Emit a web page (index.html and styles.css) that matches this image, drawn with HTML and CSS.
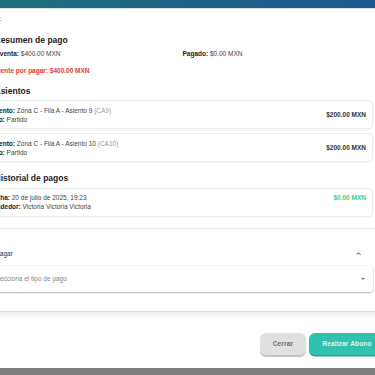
FILE: index.html
```html
<!DOCTYPE html>
<html lang="es">
<head>
    <meta charset="UTF-8">
    <meta name="viewport" content="width=device-width, initial-scale=1.0">
    <title>Detalle de venta</title>
    <link rel="stylesheet" href="styles.css">
</head>
<body>

    <div class="modal">
        <div class="modal-top"></div>

        <div class="modal-body">
            <p class="meta">Venta:</p>

            <h3 class="section-title">
                <svg width="9" height="9" viewBox="0 0 10 10"><rect x="1" y="2" width="8" height="6" rx="1" fill="none" stroke="#333" stroke-width="1.2"/></svg>
                Resumen de pago
            </h3>
            <div class="summary">
                <span><b>Total venta:</b> $400.00 MXN</span>
                <span><b>Pagado:</b> $0.00 MXN</span>
            </div>
            <p class="pending">Pendiente por pagar: $400.00 MXN</p>

            <h3 class="section-title">
                <svg width="9" height="9" viewBox="0 0 10 10"><rect x="2" y="2" width="6" height="6" fill="none" stroke="#333" stroke-width="1.2"/></svg>
                Asientos
            </h3>
            <div class="card">
                <div>
                    <div><b>Asiento:</b> Zona C - Fila A - Asiento 9 <span class="code">(CA9)</span></div>
                    <div><b>Tipo:</b> Partido</div>
                </div>
                <div class="amount">$200.00 MXN</div>
            </div>
            <div class="card">
                <div>
                    <div><b>Asiento:</b> Zona C - Fila A - Asiento 10 <span class="code">(CA10)</span></div>
                    <div><b>Tipo:</b> Partido</div>
                </div>
                <div class="amount">$200.00 MXN</div>
            </div>

            <h3 class="section-title">
                <svg width="9" height="9" viewBox="0 0 10 10"><circle cx="5" cy="5" r="3.5" fill="none" stroke="#333" stroke-width="1.2"/></svg>
                Historial de pagos
            </h3>
            <div class="card card-top">
                <div>
                    <div><b>Fecha:</b> 20 de julio de 2025, 19:23</div>
                    <div><b>Vendedor:</b> Victoria Victoria Victoria</div>
                </div>
                <div class="amount paid">$0.00 MXN</div>
            </div>
        </div>

        <div class="accordion">
            <div class="accordion-header">
                <span>Pagar</span>
                <svg width="5" height="3" viewBox="0 0 5 3"><path d="M0.6 2.7 L2.5 0.8 L4.4 2.7" fill="none" stroke="#333" stroke-width="1"/></svg>
            </div>
            <div class="select">
                <span>Selecciona el tipo de pago</span>
                <svg width="4" height="2" viewBox="0 0 4 2"><polygon points="0,0 4,0 2,2" fill="#777"/></svg>
            </div>
        </div>

        <div class="modal-footer">
            <button class="btn btn-close">Cerrar</button>
            <button class="btn btn-pay">Realizar Abono</button>
        </div>
    </div>

</body>
</html>
```

FILE: styles.css
```css
html, body {
    overflow: hidden;
}

body {
    margin: 0;
    background-color: #7f7f7f;
    font-family: "Liberation Sans", Arial, sans-serif;
    font-size: 6.5px;
    line-height: 9px;
    color: #444;
}

b {
    color: #222;
}

.modal {
    width: 422px;
    margin-left: -33px;
    background-color: #fff;
    box-shadow: 0 2px 6px rgba(0, 0, 0, 0.3);
}

.modal-top {
    height: 8px;
    background: linear-gradient(90deg, #1a737a, #1f5892);
    box-shadow: 0 1px 0 rgba(0, 0, 0, 0.12);
}

.modal-body {
    padding: 5.5px 16px 11px;
}

.meta {
    margin: 0;
    color: #555;
}

.section-title {
    display: flex;
    align-items: center;
    gap: 2.5px;
    margin: 12px 0 3.5px;
    font-size: 8.5px;
    line-height: 11px;
    color: #222;
}

.section-title + .card {
    margin-top: 0;
}

.summary {
    display: grid;
    grid-template-columns: 1fr 1fr;
    column-gap: 9px;
}

.pending {
    margin: 7.5px 0 0;
    color: #e53935;
    font-weight: bold;
}

.pending + .section-title,
.card + .section-title {
    margin-top: 11px;
}

.card {
    display: flex;
    justify-content: space-between;
    align-items: center;
    margin-top: 4px;
    padding: 4.5px 6px 4.5px 5px;
    border: 1px solid #ececec;
    border-radius: 4px;
    box-shadow: 0 1px 1px rgba(0, 0, 0, 0.04);
}

.card-top {
    align-items: flex-start;
}

.code {
    color: #999;
}

.amount {
    font-weight: bold;
    color: #333;
}

.amount.paid {
    color: #3ccf7e;
}

.accordion {
    border-top: 1px solid #e8e8e8;
    padding: 0 16px 19.5px;
}

.accordion-header {
    display: flex;
    justify-content: space-between;
    align-items: center;
    padding: 20px 12px 8.5px 12.5px;
    color: #333;
}

.select {
    display: flex;
    justify-content: space-between;
    align-items: center;
    padding: 8.3px 8px 8.3px 7.6px;
    border-radius: 4px;
    color: #888;
    box-shadow: 0 1px 2px rgba(0, 0, 0, 0.25), 0 0 0 1px rgba(0, 0, 0, 0.03);
}

.modal-footer {
    display: flex;
    justify-content: flex-end;
    gap: 3.7px;
    padding: 21px 4.5px 13.5px;
    border-top: 1px solid #dcdcdc;
    background: linear-gradient(#efefef, #fff 8px);
}

.btn {
    border: none;
    border-radius: 6px;
    padding: 6.25px 13px;
    font-family: "Liberation Sans", Arial, sans-serif;
    font-size: 6.5px;
    line-height: 9px;
    font-weight: bold;
    letter-spacing: 0.15px;
}

.btn-close {
    padding: 6.25px 12.5px;
    background-color: #e0e0e0;
    color: #6b6b6b;
    box-shadow: 0 1.5px 1px rgba(0, 0, 0, 0.25);
}

.btn-pay {
    background-color: #31c1ac;
    color: #dff7f2;
    box-shadow: 0 1.5px 0 #22a08e;
}
```
